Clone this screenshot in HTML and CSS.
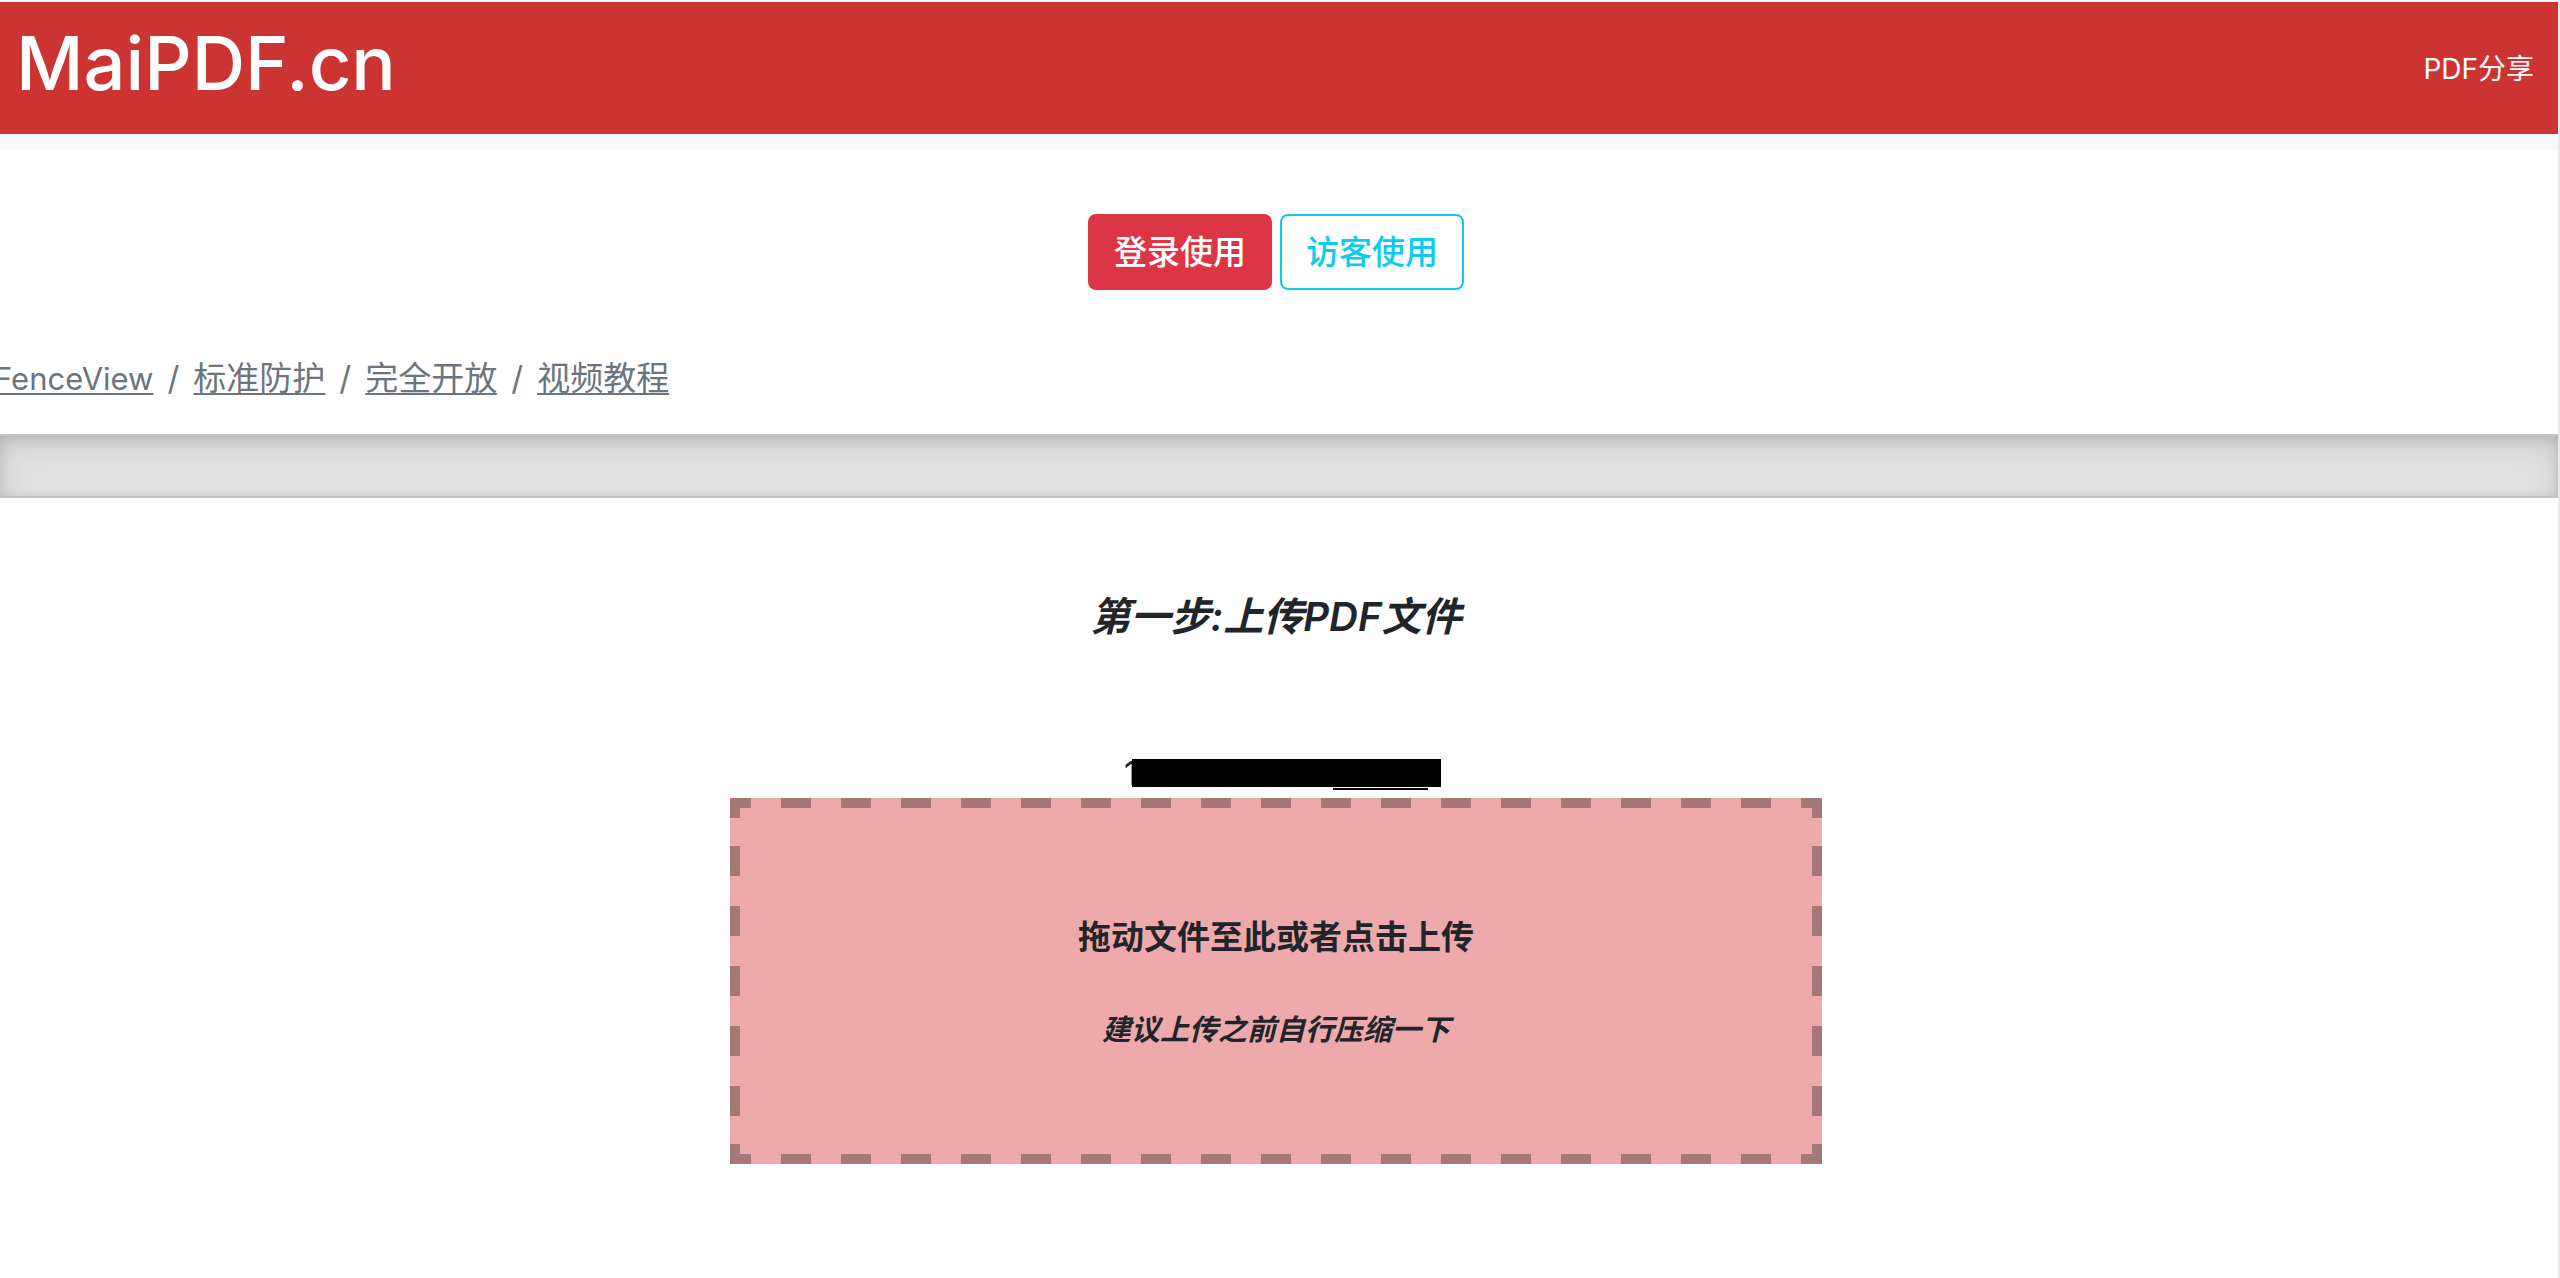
FILE: index.html
```html
<!DOCTYPE html>
<html lang="zh-CN">
<head>
<meta charset="utf-8">
<meta name="viewport" content="width=device-width, initial-scale=1">
<title>MaiPDF.cn</title>
<link rel="stylesheet" href="styles.css">
</head>
<body>
<header class="site-header">
  <nav class="navbar">
    <a class="brand" href="#">MaiPDF.cn</a>
    <a class="nav-link" href="#">PDF分享</a>
  </nav>
</header>
<main>
  <section class="intro">
    <div class="actions">
      <button class="btn btn-danger" type="button">登录使用</button>
      <button class="btn btn-outline" type="button">访客使用</button>
    </div>
    <nav aria-label="breadcrumb">
      <ol class="breadcrumb">
        <li><a class="latin" href="#">FenceView</a></li>
        <li><a href="#">标准防护</a></li>
        <li><a href="#">完全开放</a></li>
        <li><a href="#">视频教程</a></li>
      </ol>
    </nav>
  </section>
  <div class="divider"></div>
  <section class="upload">
    <h1 class="step">第一步:上传PDF文件</h1>
    <p class="status">1<span class="status-line"></span><span class="redacted"></span></p>
    <button class="dropzone" type="button">
      <span class="drop-title">拖动文件至此或者点击上传</span>
      <em class="drop-hint">建议上传之前自行压缩一下</em>
    </button>
  </section>
</main>
</body>
</html>
```
FILE: styles.css
```css
* {
  box-sizing: border-box;
}

body {
  margin: 0;
  min-height: 100vh;
  border-right: 2px solid #e8e8e8;
  background: #fff;
  color: #212529;
  font-family: Inter, "Noto Sans CJK SC", sans-serif;
  font-size: 33px;
  line-height: 50px;
  overflow-x: hidden;
}

.site-header {
  padding: 2px 0 16px;
  background: #f8f9fa;
}

.navbar {
  display: flex;
  align-items: center;
  justify-content: space-between;
  height: 132px;
  padding: 2px 24px 0 16px;
  background: #cc3333;
}

.navbar a {
  color: #fff;
  text-decoration: none;
}

.brand {
  padding-bottom: 12px;
  font-size: 74px;
  font-weight: 500;
  line-height: 96px;
}

.nav-link {
  font-size: 28px;
}

.intro,
.upload {
  margin-left: -6px;
}

.intro {
  padding: 64px 0 30px;
}

.actions {
  display: flex;
  justify-content: center;
  gap: 8px;
}

.btn {
  padding: 11px 24px;
  border: 2px solid;
  border-radius: 8px;
  font: inherit;
  font-weight: 500;
}

.btn-danger {
  border-color: #dc3545;
  background: #dc3545;
  color: #fff;
}

.btn-outline {
  border-color: #0dcaf0;
  background: transparent;
  color: #0dcaf0;
}

.breadcrumb {
  display: flex;
  margin: 63px 0 0;
  padding: 0;
  list-style: none;
  color: #6c757d;
}

.breadcrumb li + li::before {
  content: "/";
  padding: 0 14px;
}

.breadcrumb a {
  color: inherit;
  text-underline-offset: 3px;
  text-decoration-thickness: 2px;
  text-decoration-skip-ink: none;
}

.breadcrumb .latin {
  font-size: 31px;
}

.divider {
  height: 64px;
  border: solid rgba(0, 0, 0, 0.15);
  border-width: 2px 0;
  background: rgba(0, 0, 0, 0.1);
  box-shadow: inset 0 13px 39px rgba(0, 0, 0, 0.1), inset 0 3px 13px rgba(0, 0, 0, 0.15);
}

.upload {
  display: flex;
  flex-direction: column;
  align-items: center;
  padding: 94px 0 64px;
}

.step {
  margin: 0;
  font-size: 40px;
  font-style: italic;
  font-weight: 600;
}

.status {
  position: relative;
  width: 304px;
  margin: 106px 0 0;
}

.redacted {
  position: absolute;
  top: 11px;
  left: 8px;
  width: 309px;
  height: 28px;
  background: #000;
}

.status-line {
  position: absolute;
  top: 40px;
  left: 209px;
  width: 95px;
  height: 2px;
  background: #000;
}

.dropzone {
  --dash: #a67777;
  display: flex;
  flex-direction: column;
  align-items: center;
  gap: 43px;
  width: 100%;
  max-width: 1092px;
  padding: 114px 24px 109px;
  border: 0;
  background:
    linear-gradient(var(--dash) 0 0) left top / 10px 20px no-repeat,
    linear-gradient(var(--dash) 0 0) right top / 10px 20px no-repeat,
    linear-gradient(var(--dash) 0 0) left bottom / 10px 20px no-repeat,
    linear-gradient(var(--dash) 0 0) right bottom / 10px 20px no-repeat,
    linear-gradient(90deg, var(--dash) 50%, transparent 50%) -9px top / 60px 10px repeat-x,
    linear-gradient(90deg, var(--dash) 50%, transparent 50%) -9px bottom / 60px 10px repeat-x,
    linear-gradient(var(--dash) 50%, transparent 50%) left -12px / 10px 60px repeat-y,
    linear-gradient(var(--dash) 50%, transparent 50%) right -12px / 10px 60px repeat-y,
    #eeaaaa;
  color: inherit;
  font: inherit;
  font-weight: 700;
}

.drop-hint {
  font-size: 29px;
}
```
